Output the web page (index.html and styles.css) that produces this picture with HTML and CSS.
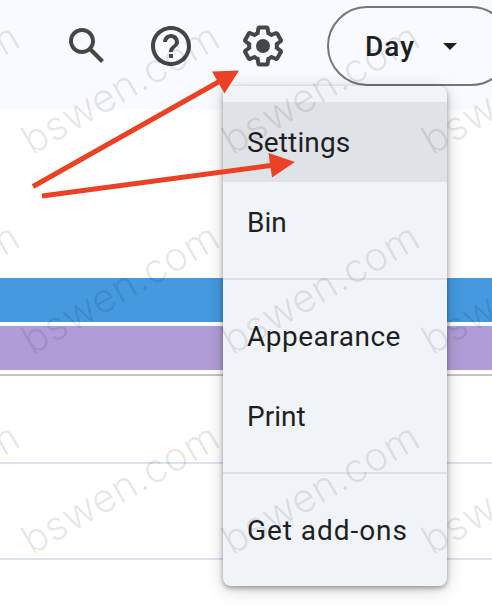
FILE: index.html
```html
<!DOCTYPE html>
<html lang="en">
<head>
<meta charset="utf-8">
<title>Calendar</title>
<link rel="stylesheet" href="styles.css">
</head>
<body>
<header class="toolbar">
  <svg class="icon" viewBox="0 0 24 24"><path d="M20.49 19l-5.73-5.73C15.53 12.2 16 10.91 16 9.5 16 5.91 13.09 3 9.5 3S3 5.91 3 9.5 5.91 16 9.5 16c1.41 0 2.7-.47 3.77-1.24L19 20.49 20.49 19zM5 9.5C5 7.01 7.01 5 9.5 5S14 7.01 14 9.5 11.99 14 9.5 14 5 11.99 5 9.5z"/></svg>
  <svg class="icon help" viewBox="0 0 24 24"><path d="M11 18h2v-2h-2v2zm1-16C6.48 2 2 6.48 2 12s4.48 10 10 10 10-4.48 10-10S17.520 2 12 2zm0 18c-4.410 0-8-3.590-8-8s3.590-8 8-8 8 3.590 8 8-3.590 8-8 8zm0-14c-2.210 0-4 1.790-4 4h2c0-1.100.9-2 2-2s2 .9 2 2c0 2-3 1.750-3 5h2c0-2.250 3-2.500 3-5 0-2.210-1.790-4-4-4z"/></svg>
  <svg class="icon gear" viewBox="0 0 24 24"><path d="M13.85 22.25h-3.7c-.74 0-1.36-.54-1.45-1.27l-.27-1.89c-.27-.14-.53-.29-.79-.46l-1.8.72c-.7.26-1.47-.03-1.81-.65L2.2 15.53c-.35-.66-.2-1.44.36-1.88l1.53-1.19c-.01-.15-.02-.3-.02-.46 0-.15.01-.31.02-.46l-1.52-1.19c-.59-.45-.74-1.26-.37-1.88l1.85-3.19c.34-.62 1.11-.9 1.79-.63l1.81.73c.26-.17.52-.32.78-.46l.27-1.91c.09-.7.71-1.25 1.44-1.25h3.7c.74 0 1.36.54 1.45 1.27l.27 1.89c.27.14.53.29.79.46l1.8-.72c.71-.26 1.48.03 1.82.65l1.84 3.18c.36.66.2 1.44-.36 1.88l-1.52 1.19c.01.15.02.3.02.46s-.01.31-.02.46l1.52 1.19c.56.45.72 1.23.37 1.86l-1.86 3.22c-.34.62-1.11.9-1.8.63l-1.8-.72c-.26.17-.52.32-.78.46l-.27 1.91c-.1.68-.72 1.22-1.46 1.22zm-3.23-2h2.76l.37-2.55.53-.22c.44-.18.88-.44 1.34-.78l.45-.34 2.38.96 1.38-2.4-2.03-1.58.07-.56c.03-.26.06-.51.06-.78s-.03-.53-.06-.78l-.07-.56 2.03-1.58-1.39-2.4-2.39.96-.45-.35c-.42-.32-.87-.58-1.33-.77l-.52-.22-.37-2.55h-2.76l-.37 2.55-.53.21c-.44.19-.88.44-1.34.79l-.45.33-2.38-.95-1.39 2.39 2.03 1.58-.07.56a7 7 0 0 0-.06.79c0 .26.02.53.06.78l.07.56-2.03 1.58 1.38 2.4 2.39-.96.45.35c.43.33.86.58 1.33.77l.53.22.38 2.55z"/><circle cx="12" cy="12" r="3.5"/></svg>
  <button class="view-button"><span>Day</span><i class="caret"></i></button>
</header>
<main class="calendar">
  <div class="all-day">
    <div class="event blue"></div>
    <div class="event purple"></div>
  </div>
  <div class="hour first"></div>
  <div class="hour"></div>
</main>
<nav class="menu">
  <div class="item active"><span class="t-settings">Settings</span></div>
  <div class="item"><span>Bin</span></div>
  <hr>
  <div class="item"><span class="t-appearance">Appearance</span></div>
  <div class="item"><span>Print</span></div>
  <hr>
  <div class="item"><span class="t-addons">Get add-ons</span></div>
</nav>
<svg class="overlay" viewBox="0 0 492 606">
  <g class="watermark">
    <text transform="translate(-168 155.500) rotate(-30)" textLength="220">bswen.com</text>
    <text transform="translate(32 155.500) rotate(-30)" textLength="220">bswen.com</text>
    <text transform="translate(232 155.500) rotate(-30)" textLength="220">bswen.com</text>
    <text transform="translate(432 155.500) rotate(-30)" textLength="220">bswen.com</text>
    <text transform="translate(-168 355.500) rotate(-30)" textLength="220">bswen.com</text>
    <text transform="translate(32 355.500) rotate(-30)" textLength="220">bswen.com</text>
    <text transform="translate(232 355.500) rotate(-30)" textLength="220">bswen.com</text>
    <text transform="translate(432 355.500) rotate(-30)" textLength="220">bswen.com</text>
    <text transform="translate(-168 555.500) rotate(-30)" textLength="220">bswen.com</text>
    <text transform="translate(32 555.500) rotate(-30)" textLength="220">bswen.com</text>
    <text transform="translate(232 555.500) rotate(-30)" textLength="220">bswen.com</text>
    <text transform="translate(432 555.500) rotate(-30)" textLength="220">bswen.com</text>
  </g>
  <g class="arrows">
    <path class="shaft" d="M33 186.500L222 80M42 196L274 165"/>
    <path d="M239 70.500L212 71.500L224.500 93.500ZM295 162L268.500 153L272 177.500Z"/>
  </g>
</svg>
</body>
</html>
```

FILE: styles.css
```css
* { box-sizing: border-box; }
body {
  position: relative;
  width: 492px;
  height: 606px;
  margin: 0;
  overflow: hidden;
  background: #fff;
  color: #1f1f1f;
  font-family: Roboto, "Liberation Sans", sans-serif;
  font-size: 28px;
}
.toolbar {
  display: flex;
  align-items: flex-start;
  height: 110px;
  padding: 6px 0 0 63px;
  background: #f9faff;
}
.icon {
  flex: none;
  width: 48px;
  height: 48px;
  margin-top: 16px;
  fill: #444746;
}
.help { margin-left: 36px; }
.gear { margin-left: 44px; }
.view-button {
  display: flex;
  flex: none;
  align-items: center;
  width: 184px;
  height: 80px;
  margin-left: 40px;
  padding: 0 0 0 36px;
  border: 2px solid #747775;
  border-radius: 40px;
  background: transparent;
  color: #1f1f1f;
  font: 500 28px Roboto, "Liberation Sans", sans-serif;
  letter-spacing: 1px;
}
.caret {
  margin-left: 28px;
  border: 7px solid transparent;
  border-top-color: #1f1f1f;
  border-bottom: 0;
}
.all-day {
  display: flex;
  flex-direction: column;
  gap: 4px;
  height: 266px;
  padding-top: 168px;
  border-bottom: 2px solid #c4c4c4;
}
.event { height: 44px; }
.blue { background: #4499df; }
.purple { background: #b09dd8; }
.hour { height: 96px; border-bottom: 2px solid #dde3ec; }
.first { height: 88px; }
.menu {
  position: absolute;
  left: 223px;
  top: 86px;
  width: 224px;
  height: 500px;
  padding: 16px 0;
  border-radius: 8px;
  background: #f0f4f9;
  box-shadow: 0 2px 5px rgba(0, 0, 0, .34), 0 4px 18px rgba(0, 0, 0, .18);
}
.item {
  display: flex;
  align-items: center;
  height: 80px;
  padding-left: 24px;
  white-space: nowrap;
}
.active { background: #dfe2e7; }
.t-settings { letter-spacing: .15px; }
.t-appearance { letter-spacing: .5px; }
.t-addons { letter-spacing: .95px; }
.menu hr {
  height: 2px;
  margin: 16px 0;
  border: 0;
  background: #dfe1e1;
}
.overlay {
  position: absolute;
  inset: 0;
  width: 492px;
  height: 606px;
  pointer-events: none;
}
.watermark {
  fill: #000;
  fill-opacity: .1;
  font: 300 40px Inter, "Liberation Sans", sans-serif;
}
.arrows { fill: #eb4226; }
.shaft { fill: none; stroke: #eb4226; stroke-width: 5; }
```
